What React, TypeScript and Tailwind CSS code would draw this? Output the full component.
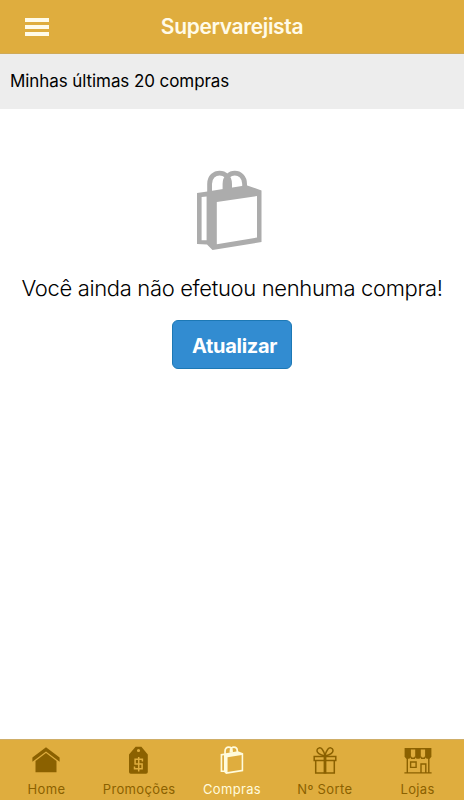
import React from 'react';
import clsx from 'clsx';

type IconProps = { className?: string };

const BagIcon: React.FC<IconProps> = ({ className }) => (
  <svg viewBox="0 0 65 80" className={className} fill="currentColor">
    <path
      fillRule="evenodd"
      d="M0 23 L10.5 21.5 L49.5 15.2 L64.5 20.5 V72 L15.5 80 L10 74.5 L0 74 Z M4.6 27 V70.3 H9.6 V26.5 Z M19.8 32 V74.3 L60 67.6 V26 Z"
    />
    <path
      fill="none"
      stroke="currentColor"
      strokeWidth="4.8"
      d="M12.6 23 V14 C12.6 -0.5 32.6 -0.5 32.6 14 V19 M28 19 V14 C28 -0.5 47.6 -0.5 47.6 14 V17"
    />
  </svg>
);

const HomeIcon: React.FC<IconProps> = ({ className }) => (
  <svg viewBox="0 0 28 28" className={className} fill="currentColor">
    <path d="M14 1.2 L27.6 11.5 V15.7 L14 5.4 L0.4 15.7 V11.5 Z" />
    <path d="M14 7 L24.5 15 V26.2 H3.5 V15 Z" />
  </svg>
);

const TagIcon: React.FC<IconProps> = ({ className }) => (
  <svg viewBox="0 0 28 28" className={className}>
    <path
      fill="currentColor"
      fillRule="evenodd"
      d="M10.6 0.8 H16.4 L22.8 8.5 V26 Q22.8 27.8 21 27.8 H5.8 Q4 27.8 4 26 V8.5 Z M13.5 2.9 A1.6 1.6 0 1 0 13.5 6.1 A1.6 1.6 0 1 0 13.5 2.9 Z"
    />
    <path
      fill="none"
      stroke="#dfad3e"
      strokeWidth="1.5"
      d="M17.4 15.4 V13.2 H10.1 V18 H17.1 V22.7 H9.5 V20.6 M13.7 11 V25.4"
    />
  </svg>
);

const GiftIcon: React.FC<IconProps> = ({ className }) => (
  <svg viewBox="0 0 28 28" className={className} fill="none" stroke="currentColor" strokeWidth="1.5">
    <path d="M3.2 10.4 H24.8 V14.4 H3.2 Z M4.7 14.4 V26.9 H23.3 V14.4" />
    <path strokeWidth="2.8" d="M14 9.5 V27.5" />
    <path d="M14 10 C9.5 9 5.5 7.3 6 4.2 C6.4 1.4 9.6 1.2 11.2 3.2 C12.6 5 13.4 7 14 10 Z" />
    <path d="M14 10 C18.5 9 22.5 7.3 22 4.2 C21.6 1.4 18.4 1.2 16.8 3.2 C15.4 5 14.6 7 14 10 Z" />
  </svg>
);

const StoreIcon: React.FC<IconProps> = ({ className }) => (
  <svg viewBox="0 0 28 28" className={className} fill="currentColor">
    <path d="M0.6 2 H6.9 V10.8 L5.4 12.8 H2.2 L0.6 10.8 Z" />
    <path d="M11.2 2 H16.8 V10.8 L15.5 12.8 H12.5 L11.2 10.8 Z" />
    <path d="M21.1 2 H27.4 V10.8 L25.8 12.8 H22.6 L21.1 10.8 Z" />
    <path
      fill="none"
      stroke="currentColor"
      strokeWidth="1.4"
      d="M6 2.7 H22 M6.5 10.7 L7.6 12.2 H10.4 L11.5 10.7 M16.5 10.7 L17.6 12.2 H20.4 L21.5 10.7 M3.3 12 V27 M24.8 12 V27 M0.4 26.9 H27.6 M6.6 16 H12.1 V21.4 H6.6 Z M17 26.5 V18 H21.8 V26.5"
    />
  </svg>
);

const tabs = [
  { label: 'Home', icon: HomeIcon },
  { label: 'Promoções', icon: TagIcon },
  { label: 'Compras', icon: BagIcon, active: true },
  { label: 'Nº Sorte', icon: GiftIcon },
  { label: 'Lojas', icon: StoreIcon }
];

const App: React.FC = () => {
  return (
    <div className="flex h-screen flex-col bg-white font-['Inter',sans-serif] text-black">
      <header className="grid h-[54px] shrink-0 grid-cols-[1fr_auto_1fr] items-center border-b border-[#cfaa58] bg-[#dfad3e] text-[#fffbe9]">
        <button aria-label="Menu" className="ml-[25px] flex w-6 flex-col gap-[3px]">
          <span className="h-1 w-full bg-current" />
          <span className="h-1 w-full bg-current" />
          <span className="h-1 w-full bg-current" />
        </button>
        <h1 className="text-[21px] font-semibold leading-6 tracking-[-0.36px]">Supervarejista</h1>
      </header>

      <div className="flex h-[55px] shrink-0 items-center bg-[#ededed] pb-[2px] pl-[10px]">
        <h2 className="text-[17px] leading-6 tracking-[-0.08px]">Minhas últimas 20 compras</h2>
      </div>

      <main className="flex flex-1 flex-col items-center pt-[61px]">
        <BagIcon className="mr-[5px] h-20 w-[65px] text-[#acacac]" />
        <p className="mt-[23px] whitespace-nowrap text-[22px] font-light leading-[30px] tracking-[-0.34px]">
          Você ainda não efetuou nenhuma compra!
        </p>
        <button className="mt-[17px] h-[49px] w-[120px] rounded-md border border-[#1c78b5] bg-[#328cd1] pl-[5px] pt-[2px] text-[20px] font-bold tracking-[-0.3px] text-white">
          Atualizar
        </button>
      </main>

      <nav className="grid h-[61px] shrink-0 grid-cols-5 border-t border-[#cfae68] bg-[#dfad3e]">
        {tabs.map(({ label, icon: Icon, active }) => (
          <button
            key={label}
            className={clsx('flex flex-col items-center pt-[6px]', active ? 'text-[#fffbdc]' : 'text-[#8b6100]')}
          >
            <Icon className="h-7 w-7" />
            <span className="mt-[7px] text-[13px] leading-4 tracking-[0.35px]">{label}</span>
          </button>
        ))}
      </nav>
    </div>
  );
};

export default App;
